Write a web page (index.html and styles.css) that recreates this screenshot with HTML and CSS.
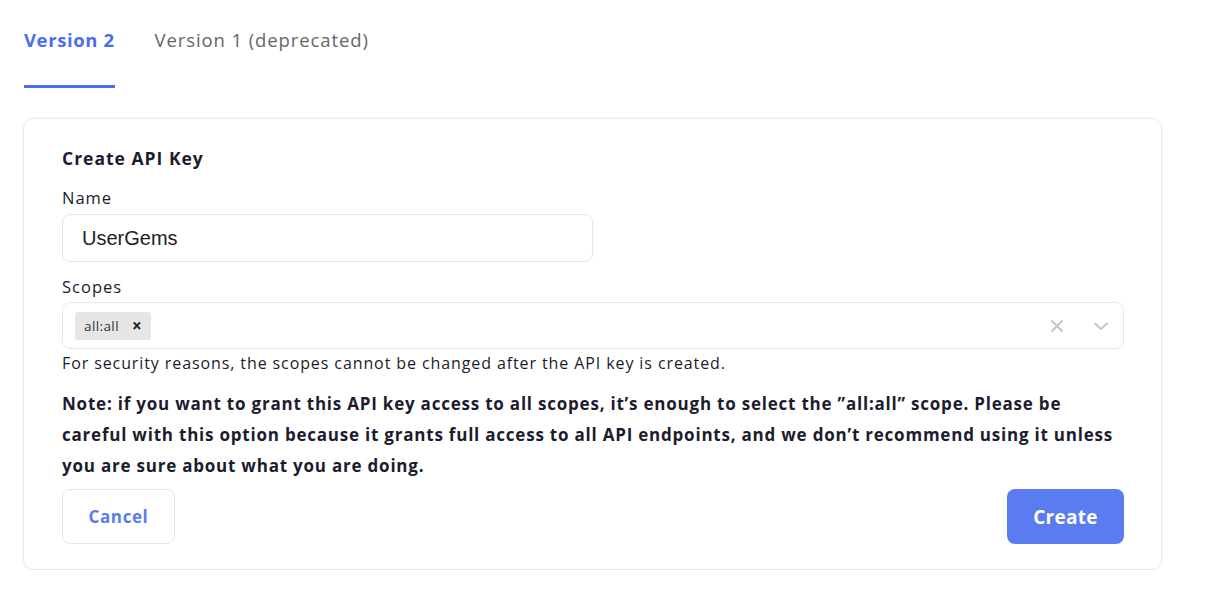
FILE: index.html
```html
<!DOCTYPE html>
<html>
<head>
<meta charset="utf-8">
<link rel="stylesheet" href="styles.css">
</head>
<body>
<div class="page">
  <div class="tabs">
    <div class="tab active">Version 2</div>
    <div class="tab">Version 1 (deprecated)</div>
  </div>
  <div class="card">
    <h2 class="title">Create API Key</h2>
    <label class="label">Name</label>
    <div class="input">UserGems</div>
    <label class="label scopes-label">Scopes</label>
    <div class="select">
      <div class="chip"><span>all:all</span><span class="chip-x">×</span></div>
      <div class="indicators">
        <svg class="ind" width="14" height="14" viewBox="0 0 14 14"><path d="M2 2L12 12M12 2L2 12" stroke="#c8c8c8" stroke-width="2.2" stroke-linecap="round"/></svg>
        <svg class="ind" width="16" height="14" viewBox="0 0 16 14"><path d="M2 4.5L8 10L14 4.5" fill="none" stroke="#c8c8c8" stroke-width="2.2" stroke-linecap="round" stroke-linejoin="round"/></svg>
      </div>
    </div>
    <p class="help">For security reasons, the scopes cannot be changed after the API key is created.</p>
    <p class="note">Note: if you want to grant this API key access to all scopes, it’s enough to select the ”all:all” scope. Please be careful with this option because it grants full access to all API endpoints, and we don’t recommend using it unless you are sure about what you are doing.</p>
    <div class="actions">
      <button class="btn btn-cancel">Cancel</button>
      <button class="btn btn-create">Create</button>
    </div>
  </div>
</div>
</body>
</html>
```
FILE: styles.css
```css
* { box-sizing: border-box; }
body {
  margin: 0;
  background: #fff;
  font-family: "Open Sans", "Noto Sans", sans-serif;
  color: #1b1b2b;
}
.page {
  padding: 0 45px 0 23px;
}
.tabs {
  display: flex;
  gap: 40px;
  padding-left: 1px;
}
.tab {
  font-size: 18.5px;
  letter-spacing: 0.9px;
  color: #666;
  padding: 27px 0 0;
  height: 88px;
  border-bottom: 3px solid transparent;
}
.tab.active {
  color: #4a6cf7;
  font-weight: 700;
  letter-spacing: 0.6px;
  border-bottom-color: #4a6cf7;
}
.card {
  margin-top: 30px;
  border: 1px solid #e8e8ee;
  border-radius: 10px;
  padding: 27px 37px 25px 38px;
  box-shadow: 0 1px 4px rgba(0,0,0,0.03);
}
.title {
  margin: 0;
  font-size: 17.5px;
  letter-spacing: 1px;
  font-weight: 700;
  line-height: 24px;
  color: #1c1c2e;
}
.label {
  display: block;
  font-size: 16.5px;
  letter-spacing: 1px;
  margin-top: 18px;
  line-height: 20px;
}
.scopes-label { margin-top: 15px; }
.input {
  margin-top: 6px;
  width: 531px;
  height: 48px;
  border: 1px solid #e6e6e6;
  border-radius: 8px;
  padding: 0 19px;
  display: flex;
  align-items: center;
  font-family: "Liberation Sans", Arial, sans-serif;
  font-size: 20px;
  color: #222;
}
.select {
  margin-top: 5px;
  height: 47px;
  border: 1px solid #e8e8ec;
  border-radius: 8px;
  display: flex;
  align-items: center;
  justify-content: space-between;
  padding: 0 14px 0 12px;
}
.chip {
  display: flex;
  align-items: center;
  gap: 13px;
  background: #e6e6e6;
  border-radius: 3px;
  height: 28px;
  padding: 0 9px 0 9px;
  font-size: 13.5px;
  letter-spacing: 0.4px;
  color: #333;
}
.chip-x {
  font-weight: 700;
  font-size: 17px;
  color: #222;
  line-height: 1;
}
.indicators {
  display: flex;
  align-items: center;
  gap: 29px;
}
.ind { display: block; }
.help {
  margin: 4px 0 0;
  font-size: 16px;
  letter-spacing: 0.9px;
  line-height: 20px;
}
.note {
  margin: 15px 0 0;
  font-size: 17px;
  letter-spacing: 0.78px;
  font-weight: 700;
  line-height: 31px;
  color: #1c1c2e;
}
.actions {
  margin-top: 8px;
  display: flex;
  justify-content: space-between;
}
.btn {
  font-family: "Open Sans", "Noto Sans", sans-serif;
  font-weight: 700;
  border-radius: 8px;
  height: 55px;
  cursor: pointer;
}
.btn-cancel {
  width: 113px;
  background: #fff;
  border: 1px solid #e6e6ec;
  color: #5b7cf0;
  font-size: 17px;
  letter-spacing: 0.6px;
}
.btn-create {
  width: 117px;
  background: #5b7cf0;
  border: none;
  color: #fff;
  font-size: 19px;
  letter-spacing: 0.3px;
}
```
